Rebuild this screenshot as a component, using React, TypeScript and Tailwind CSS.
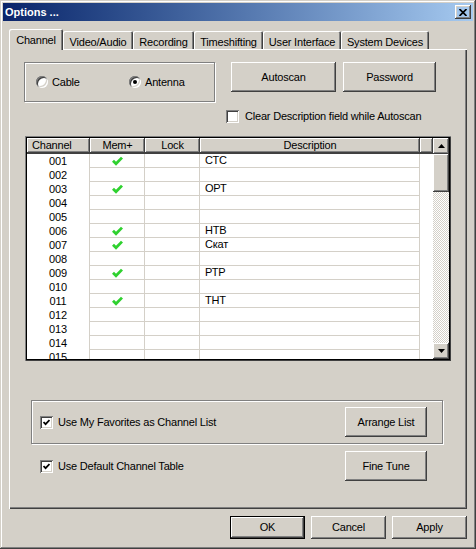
import React from "react";

// Classic Win2000 "Options" dialog, Channel tab.

const raised =
  "shadow-[inset_-1px_-1px_0_#404040,inset_1px_1px_0_#ffffff,inset_-2px_-2px_0_#808080,inset_2px_2px_0_#d4d0c8]";
const sunken =
  "shadow-[inset_1px_1px_0_#808080,inset_-1px_-1px_0_#ffffff,inset_2px_2px_0_#404040,inset_-2px_-2px_0_#d4d0c8]";
const etched = "border border-[#808080] shadow-[1px_1px_0_#ffffff,inset_1px_1px_0_#ffffff]";

const tabs = [
  { label: "Channel", w: "w-[54px]" },
  { label: "Video/Audio", w: "w-[70px]" },
  { label: "Recording", w: "w-[61px]" },
  { label: "Timeshifting", w: "w-[69px]" },
  { label: "User Interface", w: "w-[78px]" },
  { label: "System Devices", w: "w-[88px]" },
];

const names: Record<string, string> = {
  "001": "СТС",
  "003": "ОРТ",
  "006": "НТВ",
  "007": "Скат",
  "009": "РТР",
  "011": "ТНТ",
};

const rows = Array.from({ length: 15 }, (_, i) => String(i + 1).padStart(3, "0"));

function Button({ label, className = "", isDefault = false }: { label: string; className?: string; isDefault?: boolean }) {
  if (isDefault) {
    return (
      <div className={`border border-black ${className}`}>
        <div className={`w-full h-full flex items-center justify-center ${raised}`}>{label}</div>
      </div>
    );
  }
  return <div className={`flex items-center justify-center ${raised} ${className}`}>{label}</div>;
}

function Radio({ checked }: { checked?: boolean }) {
  return (
    <div className={`w-[12px] h-[12px] rounded-full bg-white flex items-center justify-center ${sunken}`}>
      {checked && <div className="w-[4px] h-[4px] rounded-full bg-black" />}
    </div>
  );
}

function Checkbox({ checked }: { checked?: boolean }) {
  return (
    <div className={`w-[13px] h-[13px] bg-white flex items-center justify-center shrink-0 ${sunken}`}>
      {checked && (
        <svg width="7" height="7" viewBox="0 0 7 7">
          <path d="M0.5 3 L2.6 5.2 L6.5 1" fill="none" stroke="#000" strokeWidth="1.8" />
        </svg>
      )}
    </div>
  );
}

function GreenCheck() {
  return (
    <svg width="11" height="10" viewBox="0 0 11 10">
      <path d="M1 4.8 L4 7.8 L10 1.6" fill="none" stroke="#2fd12f" strokeWidth="2.8" />
    </svg>
  );
}

function Arrow({ down }: { down?: boolean }) {
  return (
    <svg width="7" height="4" viewBox="0 0 7 4">
      <path d={down ? "M0 0 L7 0 L3.5 4z" : "M3.5 0 L7 4 L0 4z"} fill="#000" />
    </svg>
  );
}

export default function App() {
  return (
    <div
      className={`w-[476px] h-[549px] bg-[#d4d0c8] p-[3px] flex flex-col text-[11px] tracking-[-0.2px] text-black font-[family-name:Liberation_Sans,Arial,sans-serif] shadow-[inset_-1px_-1px_0_#404040,inset_1px_1px_0_#d4d0c8,inset_-2px_-2px_0_#808080,inset_2px_2px_0_#ffffff]`}
    >
      {/* title bar */}
      <div className="h-[18px] flex items-center justify-between pl-[2px] pr-[2px] bg-linear-to-r from-[#0a246a] to-[#a6caf0]">
        <span className="text-white font-bold tracking-normal">Options ...</span>
        <div className={`w-[16px] h-[14px] flex items-center justify-center ${raised}`}>
          <svg width="8" height="7" viewBox="0 0 8 7">
            <path d="M0.5 0 L7.5 7 M7.5 0 L0.5 7" stroke="#000" strokeWidth="1.7" />
          </svg>
        </div>
      </div>

      {/* tabs */}
      <div className="mt-[8px] ml-[6px] h-[20px] flex items-end">
        {tabs.map((t, i) =>
          i === 0 ? (
            <div
              key={t.label}
              className={`${t.w} h-[21px] -mb-px relative z-10 bg-[#d4d0c8] rounded-t-[2px] flex justify-center pt-[3px] shadow-[inset_1px_1px_0_#ffffff,inset_-1px_0_0_#404040,inset_-2px_0_0_#808080]`}
            >
              {t.label}
            </div>
          ) : (
            <div
              key={t.label}
              className={`${t.w} h-[18px] rounded-t-[2px] flex justify-center pt-[3px] shadow-[inset_1px_1px_0_#ffffff,inset_-1px_0_0_#404040,inset_-2px_0_0_#808080]`}
            >
              {t.label}
            </div>
          ),
        )}
      </div>

      {/* tab panel */}
      <div className="ml-[6px] w-[458px] h-[460px] flex flex-col shadow-[inset_1px_1px_0_#ffffff,inset_-1px_-1px_0_#404040,inset_-2px_-2px_0_#808080]">
        <div className="mt-[13px] ml-[15px] h-[59px] flex items-start">
          <div className={`w-[191px] h-[40px] flex items-center pl-[11px] ${etched}`}>
            <div className="w-[93px] flex items-center gap-[4px]">
              <Radio />
              <span>Cable</span>
            </div>
            <div className="flex items-center gap-[4px]">
              <Radio checked />
              <span>Antenna</span>
            </div>
          </div>
          <div className="ml-[16px] flex flex-col">
            <div className="flex gap-[7px]">
              <Button label="Autoscan" className="w-[105px] h-[30px]" />
              <Button label="Password" className="w-[93px] h-[30px]" />
            </div>
            <div className="mt-[16px] -ml-[5px] flex items-center gap-[6px]">
              <Checkbox />
              <span>Clear Description field while Autoscan</span>
            </div>
          </div>
        </div>

        {/* channel list */}
        <div className="mt-[15px] ml-[16px] w-[426px] h-[225px] p-[2px] bg-white shadow-[inset_1px_1px_0_#808080,inset_-1px_-1px_0_#404040,inset_2px_2px_0_#000000,inset_-2px_-2px_0_#000000]">
          <div className="w-full h-full flex">
            <div className="w-[406px] flex flex-col">
              <div className="h-[16px] flex shrink-0 border-b border-[#404040] bg-[#d4d0c8]">
                <div className={`w-[63px] flex items-center pl-[5px] ${raised}`}>Channel</div>
                <div className={`w-[55px] flex items-center justify-center ${raised}`}>Mem+</div>
                <div className={`w-[55px] flex items-center justify-center ${raised}`}>Lock</div>
                <div className={`w-[220px] flex items-center justify-center ${raised}`}>Description</div>
                <div className={`w-[13px] ${raised}`} />
              </div>
              <div className="flex-1 overflow-hidden">
                {rows.map((ch) => (
                  <div key={ch} className="h-[14px] flex">
                    <div className="w-[63px] border-r border-[#d4d0c8] flex items-center justify-center">{ch}</div>
                    <div className="w-[55px] border-r border-b border-[#d4d0c8] flex items-center justify-center">
                      {names[ch] && <GreenCheck />}
                    </div>
                    <div className="w-[55px] border-r border-b border-[#d4d0c8]" />
                    <div className="w-[220px] border-r border-b border-[#d4d0c8] flex items-center pl-[5px]">
                      {names[ch] ?? ""}
                    </div>
                  </div>
                ))}
              </div>
            </div>
            <div className="w-[16px] flex flex-col">
              <div className={`h-[16px] flex items-center justify-center bg-[#d4d0c8] ${raised}`}>
                <Arrow />
              </div>
              <div className={`h-[38px] bg-[#d4d0c8] ${raised}`} />
              <div className="flex-1 bg-[image:repeating-conic-gradient(#d4d0c8_0_25%,#ffffff_0_50%)] bg-size-[2px_2px]" />
              <div className={`h-[16px] flex items-center justify-center bg-[#d4d0c8] ${raised}`}>
                <Arrow down />
              </div>
            </div>
          </div>
        </div>

        <div className={`mt-[39px] ml-[22px] w-[412px] h-[44px] flex items-center pl-[8px] pr-[15px] ${etched}`}>
          <Checkbox checked />
          <span className="ml-[5px]">Use My Favorites as Channel List</span>
          <Button label="Arrange List" className="ml-auto w-[82px] h-[30px]" />
        </div>

        <div className="mt-[7px] ml-[31px] w-[387px] h-[30px] flex items-center">
          <Checkbox checked />
          <span className="ml-[5px]">Use Default Channel Table</span>
          <Button label="Fine Tune" className="ml-auto w-[82px] h-[30px]" />
        </div>
      </div>

      {/* dialog buttons */}
      <div className="mt-[7px] pr-[6px] flex justify-end gap-[6px]">
        <Button label="OK" isDefault className="w-[75px] h-[23px]" />
        <Button label="Cancel" className="w-[75px] h-[23px]" />
        <Button label="Apply" className="w-[75px] h-[23px]" />
      </div>
    </div>
  );
}
